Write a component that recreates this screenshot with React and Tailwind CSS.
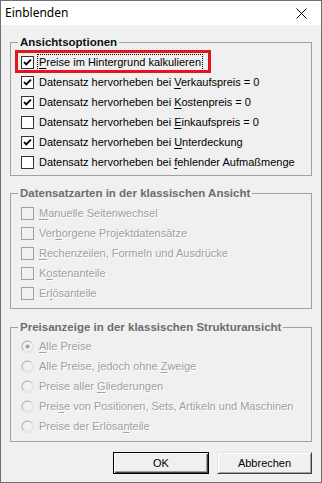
import React from 'react'

const FONT = { fontFamily: '"Liberation Sans", Arial, sans-serif' }

function CheckBox({ checked, disabled }) {
  return (
    <span
      className={`flex h-[13px] w-[13px] shrink-0 items-center justify-center border ${
        disabled ? 'border-[#a0a0a0] bg-[#f0f0f0]' : 'border-[#333333] bg-white'
      }`}
    >
      {checked && (
        <svg width="11" height="11" viewBox="0 0 11 11">
          <path d="M2 5 L4.2 7.4 L9 2.6" fill="none" stroke="#000" strokeWidth="1.8" />
        </svg>
      )}
    </span>
  )
}

function Radio({ checked }) {
  return (
    <svg width="13" height="13" viewBox="0 0 13 13" className="shrink-0">
      <circle cx="6.5" cy="6.5" r="5.5" fill="#f0f0f0" stroke="#a0a0a0" strokeWidth="1" />
      <path d="M10.4 2.6 A5.5 5.5 0 0 1 2.6 10.4" fill="none" stroke="#ffffff" strokeWidth="1" />
      {checked && <circle cx="6.5" cy="6.5" r="2" fill="#a0a0a0" />}
    </svg>
  )
}

// Label text with one underlined access key
function Label({ pre, key_, post }) {
  return (
    <>
      {pre}
      <span className="underline underline-offset-[2px]">{key_}</span>
      {post}
    </>
  )
}

function Group({ title, disabled, children, className = '' }) {
  return (
    <fieldset className={`border border-[#a0a0a0] ${className}`}>
      <legend
        className={`ml-[7px] px-[2px] text-[11.5px] font-bold leading-[14px] ${
          disabled ? 'text-[#6d6d6d]' : 'text-[#111111]'
        }`}
      >
        {title}
      </legend>
      {children}
    </fieldset>
  )
}

const ansicht = [
  { checked: true, label: ['', 'P', 'reise im Hintergrund kalkulieren'], focus: true },
  { checked: true, label: ['Datensatz hervorheben bei ', 'V', 'erkaufspreis = 0'] },
  { checked: true, label: ['Datensatz hervorheben bei ', 'K', 'ostenpreis = 0'] },
  { checked: false, label: ['Datensatz hervorheben bei ', 'E', 'inkaufspreis = 0'] },
  { checked: true, label: ['Datensatz hervorheben bei ', 'U', 'nterdeckung'] },
  { checked: false, label: ['Datensatz hervorheben bei ', 'f', 'ehlender Aufmaßmenge'] },
]

const arten = [
  ['', 'M', 'anuelle Seitenwechsel'],
  ['Ver', 'b', 'orgene Projektdatensätze'],
  ['', 'R', 'echenzeilen, Formeln und Ausdrücke'],
  ['K', 'o', 'stenanteile'],
  ['Er', 'l', 'ösanteile'],
]

const preise = [
  ['', 'A', 'lle Preise'],
  ['Alle Preise, jedoch ohne ', 'Z', 'weige'],
  ['Preise aller ', 'G', 'liederungen'],
  ['Prei', 's', 'e von Positionen, Sets, Artikeln und Maschinen'],
  ['Preise der Erlösa', 'n', 'teile'],
]

export default function App() {
  return (
    <div
      className="flex h-[483px] w-[322px] flex-col border border-[#707070] bg-[#f0f0f0] text-black"
      style={FONT}
    >
      {/* title bar */}
      <div className="flex h-[24px] shrink-0 items-center justify-between bg-white pl-[4px] pr-[14px]">
        <span className="text-[12px]" style={{ fontFamily: '"Noto Sans", sans-serif' }}>
          Einblenden
        </span>
        <svg width="11" height="11" viewBox="0 0 11 11">
          <path d="M0.5 0.5 L10.5 10.5 M10.5 0.5 L0.5 10.5" stroke="#000" strokeWidth="1" />
        </svg>
      </div>

      <div className="flex flex-col px-[9px] pt-[10px]">
        <Group title="Ansichtsoptionen" className="pb-[3px]">
          <div className="flex flex-col pl-[10px] pt-[3px]">
            {ansicht.map((row, i) => (
              <div key={i} className="relative flex h-[20px] items-center gap-[3px] text-[11px]">
                <CheckBox checked={row.checked} />
                <span
                  className={`border px-[1px] leading-[15px] ${
                    row.focus ? 'border-dotted border-black' : 'border-transparent'
                  }`}
                >
                  <Label pre={row.label[0]} key_={row.label[1]} post={row.label[2]} />
                </span>
                {row.focus && (
                  <div className="absolute left-[-6px] top-[-2px] h-[23px] w-[196px] border-[3px] border-[#e3151f]" />
                )}
              </div>
            ))}
          </div>
        </Group>

        <Group title="Datensatzarten in der klassischen Ansicht" disabled className="mt-[10px] pb-[5px]">
          <div className="flex flex-col pl-[10px] pt-[3px]">
            {arten.map((l, i) => (
              <div
                key={i}
                className="flex h-[20px] items-center gap-[3px] text-[11px] text-[#a0a0a0] [text-shadow:1px_1px_0_#ffffff]"
              >
                <CheckBox disabled />
                <span className="border border-transparent px-[1px] leading-[15px]">
                  <Label pre={l[0]} key_={l[1]} post={l[2]} />
                </span>
              </div>
            ))}
          </div>
        </Group>

        <Group title="Preisanzeige in der klassischen Strukturansicht" disabled className="mt-[11px] pb-[5px]">
          <div className="flex flex-col pl-[10px] pt-[2px]">
            {preise.map((l, i) => (
              <div
                key={i}
                className="flex h-[20px] items-center gap-[3px] text-[11px] text-[#a0a0a0] [text-shadow:1px_1px_0_#ffffff]"
              >
                <Radio checked={i === 0} />
                <span className="border border-transparent px-[1px] leading-[15px]">
                  <Label pre={l[0]} key_={l[1]} post={l[2]} />
                </span>
              </div>
            ))}
          </div>
        </Group>

        <div className="mt-[10px] flex justify-end gap-[8px] pr-[0px]">
          <button
            type="button"
            className="h-[22px] w-[96px] border border-black bg-[#f0f0f0] text-[11px] shadow-[inset_1px_1px_0_#ffffff,inset_-1px_-1px_0_#404040,inset_-2px_-2px_0_#a0a0a0]"
          >
            OK
          </button>
          <button
            type="button"
            className="h-[22px] w-[95px] border border-t-[#e3e3e3] border-l-[#e3e3e3] border-r-[#404040] border-b-[#404040] bg-[#f0f0f0] text-[11px] shadow-[inset_1px_1px_0_#ffffff,inset_-1px_-1px_0_#a0a0a0]"
          >
            Abbrechen
          </button>
        </div>
      </div>
    </div>
  )
}
